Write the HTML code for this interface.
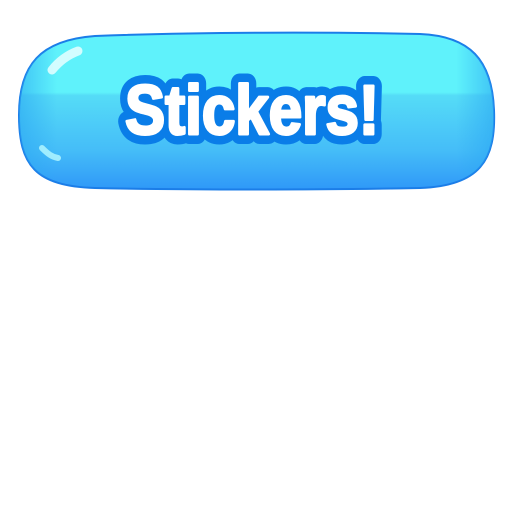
<!DOCTYPE html>
<html><head><style>html,body{margin:0;padding:0;background:#fff;width:512px;height:512px;overflow:hidden}</style></head>
<body>
<svg width="512" height="512" viewBox="0 0 512 512" xmlns="http://www.w3.org/2000/svg">
<defs>
<linearGradient id="g" x1="0" y1="0" x2="0" y2="1">
<stop offset="0" stop-color="#5ff2fb"/>
<stop offset="0.38" stop-color="#5ff2fb"/>
<stop offset="0.40" stop-color="#55dcf7"/>
<stop offset="0.75" stop-color="#45bdf8"/>
<stop offset="1" stop-color="#2f98f8"/>
</linearGradient>
<linearGradient id="side" x1="0" y1="0" x2="1" y2="0">
<stop offset="0" stop-color="#2aa6f2" stop-opacity="0.6"/>
<stop offset="0.08" stop-color="#2aa6f2" stop-opacity="0"/>
<stop offset="0.92" stop-color="#2aa6f2" stop-opacity="0"/>
<stop offset="1" stop-color="#2aa6f2" stop-opacity="0.6"/>
</linearGradient>
</defs>
<path d="M95 36 C200 32 330 32 420 34 C470 36 492 60 494 110 C496 160 480 186 420 188 C320 190 190 190 95 188 C35 186 19 165 19 115 C19 65 40 40 95 36 Z" fill="url(#g)" stroke="#1b7de8" stroke-width="2"/>
<path d="M95 36 C200 32 330 32 420 34 C470 36 492 60 494 110 C496 160 480 186 420 188 C320 190 190 190 95 188 C35 186 19 165 19 115 C19 65 40 40 95 36 Z" fill="url(#side)"/>
<path d="M52 70 C60 60 70 54 78 51" stroke="#e8ffff" stroke-width="9" stroke-linecap="round" fill="none" opacity="0.85"/>
<path d="M42 148 C48 154 52 157 58 158" stroke="#b8faff" stroke-width="6" stroke-linecap="round" fill="none" opacity="0.8"/>
<text x="125" y="134" font-family="Liberation Sans, sans-serif" font-weight="bold" font-size="70" textLength="254" lengthAdjust="spacingAndGlyphs" fill="#fff" stroke="#0a7de8" stroke-width="20" stroke-linejoin="round" paint-order="stroke">Stickers!</text>
<text x="125" y="134" font-family="Liberation Sans, sans-serif" font-weight="bold" font-size="70" textLength="254" lengthAdjust="spacingAndGlyphs" fill="#fff" stroke="#fff" stroke-width="3" stroke-linejoin="round">Stickers!</text>
</svg>
</body></html>
